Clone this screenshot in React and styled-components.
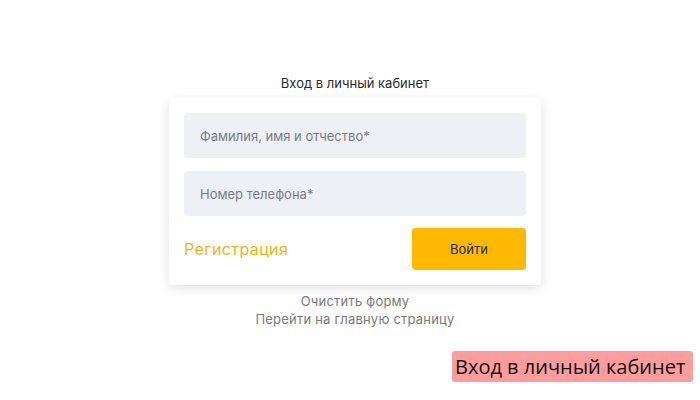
import React from "react";
import styled, { createGlobalStyle } from "styled-components";

const Global = createGlobalStyle`
  html, body { margin: 0; padding: 0; background: #ffffff; }
  body { font-family: Inter, "Noto Sans", sans-serif; }
  * { box-sizing: border-box; }
`;

const Page = styled.div`
  width: 700px;
  height: 400px;
  position: relative;
  display: flex;
  flex-direction: column;
  align-items: center;
  padding: 75px 0 0 10px;
`;

const Title = styled.h1`
  margin: 0 0 7px;
  font-size: 13px;
  font-weight: 400;
  color: #2b2b2b;
  line-height: 16px;
`;

const Card = styled.form`
  width: 372px;
  padding: 15px;
  background: #fff;
  border-radius: 4px;
  box-shadow: 0 3px 12px rgba(0, 0, 0, 0.12);
  display: flex;
  flex-direction: column;
  gap: 13px;
`;

const Field = styled.input`
  width: 100%;
  height: 45px;
  border: none;
  outline: none;
  border-radius: 4px;
  background: #edf0f5;
  padding: 0 16px;
  font-family: inherit;
  font-size: 13px;
  color: #333;
  &::placeholder { color: #7a7d85; }
`;

const Actions = styled.div`
  display: flex;
  align-items: center;
  justify-content: space-between;
  margin-top: -1px;
`;

const RegLink = styled.a`
  font-size: 16px;
  color: #f4b414;
  text-decoration: none;
  letter-spacing: 0.4px;
`;

const Submit = styled.button`
  width: 114px;
  height: 42px;
  border: none;
  border-radius: 4px;
  background: #ffba00;
  font-family: inherit;
  font-size: 13px;
  color: #2a2410;
`;

const Links = styled.div`
  margin-top: 8px;
  display: flex;
  flex-direction: column;
  align-items: center;
  gap: 2px;
`;

const SubLink = styled.a`
  font-size: 13px;
  line-height: 16px;
  color: #7a7a7a;
  text-decoration: none;
  letter-spacing: 0.2px;
`;

const Badge = styled.div`
  position: absolute;
  left: 452px;
  top: 351px;
  padding: 2px 8px 2px 3px;
  background: #ff9c9c;
  border-radius: 3px;
  font-family: "Open Sans", sans-serif;
  font-size: 20px;
  line-height: 27px;
  color: #111;
`;

export default function App() {
  return (
    <>
      <Global />
      <Page>
        <Title>Вход в личный кабинет</Title>
        <Card onSubmit={(e) => e.preventDefault()}>
          <Field placeholder="Фамилия, имя и отчество*" />
          <Field placeholder="Номер телефона*" />
          <Actions>
            <RegLink href="#">Регистрация</RegLink>
            <Submit type="submit">Войти</Submit>
          </Actions>
        </Card>
        <Links>
          <SubLink href="#">Очистить форму</SubLink>
          <SubLink href="#">Перейти на главную страницу</SubLink>
        </Links>
        <Badge>Вход в личный кабинет</Badge>
      </Page>
    </>
  );
}
